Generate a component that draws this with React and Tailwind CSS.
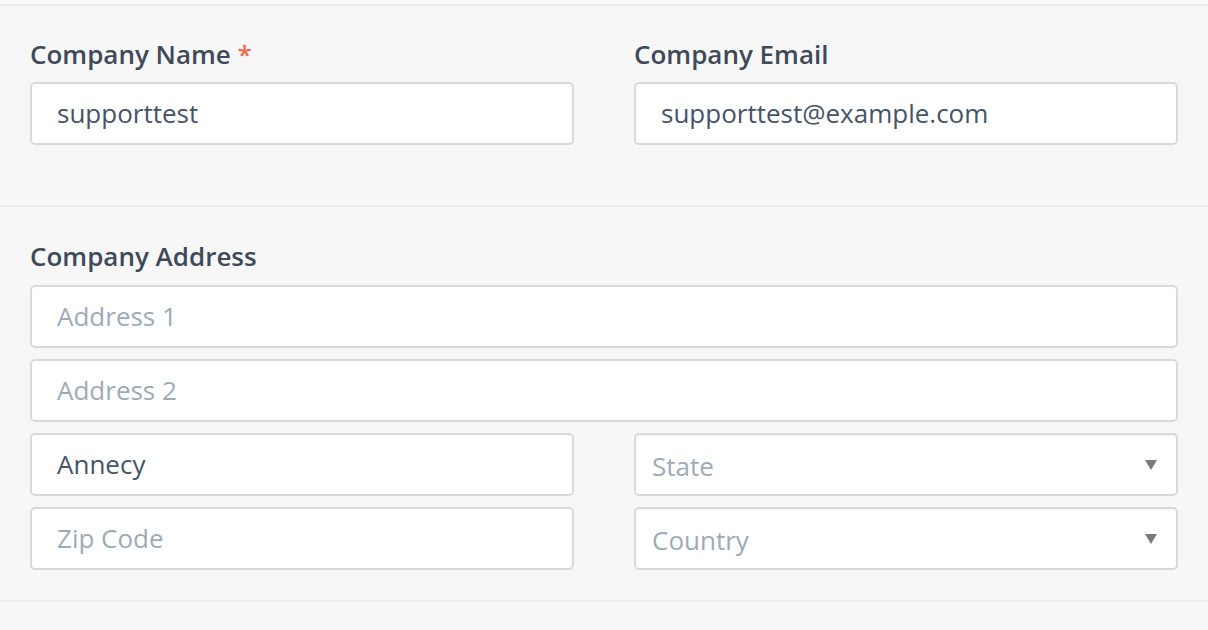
import React from "react";

function Field({ value, placeholder }) {
  return (
    <div className="h-[63px] rounded-[5px] border-2 border-[#d9d9d9] bg-white pl-[25px] flex items-center">
      {value ? (
        <span className="text-[26px] text-[#465467]">{value}</span>
      ) : (
        <span className="text-[26px] text-[#9eaab8]">{placeholder}</span>
      )}
    </div>
  );
}

function Select({ placeholder }) {
  return (
    <div className="h-[63px] rounded-[5px] border-2 border-[#d9d9d9] bg-white pl-[16px] pr-[19px] pt-[3px] flex items-center justify-between shadow-[inset_0_2px_2px_rgba(0,0,0,0.04)]">
      <span className="text-[26px] text-[#9eaab8]">{placeholder}</span>
      <svg width="12" height="10" viewBox="0 0 12 10" className="mt-[-2px]">
        <polygon points="0,0 12,0 6,10" fill="#7b7b7b" />
      </svg>
    </div>
  );
}

function Label({ children }) {
  return (
    <div className="text-[26px] leading-[34px] font-semibold text-[#3e4a59]">{children}</div>
  );
}

export default function App() {
  return (
    <div
      className="w-[1208px] h-[630px] bg-[#f7f7f7] overflow-hidden"
      style={{ fontFamily: '"Open Sans", "Noto Sans", sans-serif' }}
    >
      <div className="h-[4px] bg-[#fafafa]" />
      <div className="border-t-2 border-[#ececec] px-[30px] pt-[31px] pb-[60px]">
        <div className="grid grid-cols-2 gap-x-[60px]">
          <div className="flex flex-col gap-[11px]">
            <Label>
              Company Name <span className="text-[#f26552]">*</span>
            </Label>
            <Field value="supporttest" />
          </div>
          <div className="flex flex-col gap-[11px]">
            <Label>Company Email</Label>
            <Field value="supporttest@example.com" />
          </div>
        </div>
      </div>
      <div className="border-t-2 border-[#ececec] px-[30px] pt-[32px] pb-[30px]">
        <Label>Company Address</Label>
        <div className="mt-[12px] flex flex-col gap-[11px]">
          <Field placeholder="Address 1" />
          <Field placeholder="Address 2" />
          <div className="grid grid-cols-2 gap-x-[60px] gap-y-[11px]">
            <Field value="Annecy" />
            <Select placeholder="State" />
            <Field placeholder="Zip Code" />
            <Select placeholder="Country" />
          </div>
        </div>
      </div>
      <div className="border-t-2 border-[#ececec]" />
    </div>
  );
}
